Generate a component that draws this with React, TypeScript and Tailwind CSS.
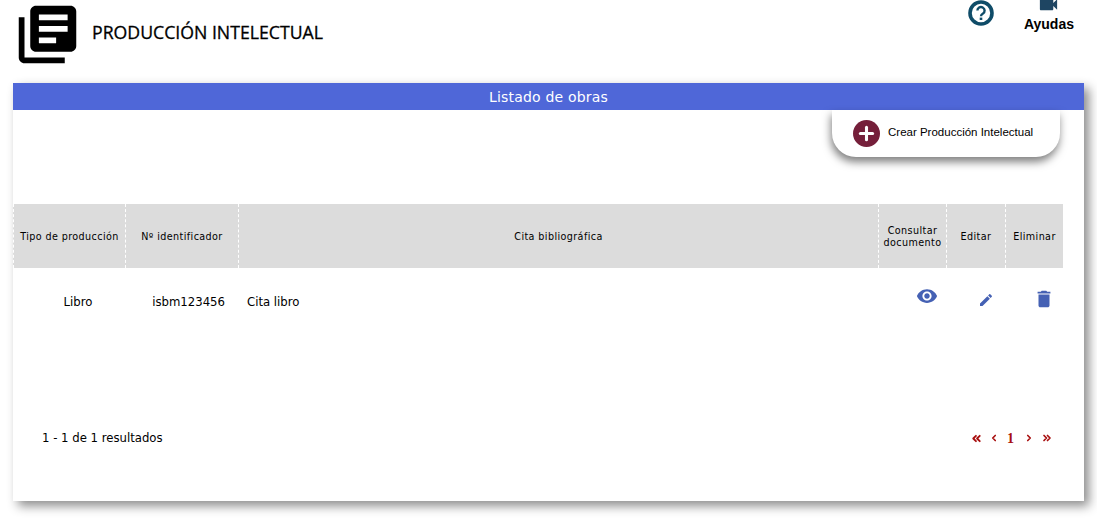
import { ChevronLeft, ChevronRight, ChevronsLeft, ChevronsRight, Plus } from "lucide-react";

const iconPaths = {
  books:
    "M4 6H2v14c0 1.1.9 2 2 2h14v-2H4V6zm16-4H8c-1.1 0-2 .9-2 2v12c0 1.1.9 2 2 2h12c1.1 0 2-.9 2-2V4c0-1.1-.9-2-2-2zm-1 9H9V9h10v2zm-4 4H9v-2h6v2zm4-8H9V5h10v2z",
  eye: "M12 4.5C7 4.5 2.73 7.61 1 12c1.73 4.39 6 7.5 11 7.5s9.27-3.11 11-7.5c-1.73-4.39-6-7.5-11-7.5zM12 17c-2.76 0-5-2.24-5-5s2.24-5 5-5 5 2.24 5 5-2.24 5-5 5zm0-8c-1.66 0-3 1.34-3 3s1.34 3 3 3 3-1.34 3-3-1.34-3-3-3z",
  edit: "M3 17.25V21h3.75L17.81 9.94l-3.75-3.75L3 17.25zM20.71 7.04c.39-.39.39-1.02 0-1.41l-2.34-2.34c-.39-.39-1.02-.39-1.41 0l-1.83 1.83 3.75 3.75 1.83-1.83z",
  trash: "M6 19c0 1.1.9 2 2 2h8c1.1 0 2-.9 2-2V7H6v12zM19 4h-3.5l-1-1h-5l-1 1H5v2h14V4z",
  video:
    "M17 10.5V7c0-.55-.45-1-1-1H4c-.55 0-1 .45-1 1v10c0 .55.45 1 1 1h12c.55 0 1-.45 1-1v-3.5l4 4v-11l-4 4z",
};

function Icon({ name, className }: { name: keyof typeof iconPaths; className: string }) {
  return (
    <svg className={className} viewBox="0 0 24 24" fill="currentColor">
      <path d={iconPaths[name]} />
    </svg>
  );
}

function HelpIcon() {
  return (
    <svg className="size-[26px] text-[#0f4c68]" viewBox="0 0 26 26" fill="none" stroke="currentColor">
      <circle cx="13" cy="13" r="11" strokeWidth="3.6" />
      <path d="M9.4 10.6a3.6 3.6 0 1 1 5.6 3c-1.3.8-2 1.3-2 2.6" strokeWidth="2.4" />
      <path d="M13 17.6v2.4" strokeWidth="2.6" />
    </svg>
  );
}

const columns = [
  { label: "Tipo de producción", width: "w-[112px]" },
  { label: "Nº identificador", width: "w-[113px]" },
  { label: "Cita bibliográfica", width: "flex-1" },
  { label: "Consultar documento", width: "w-[68px]" },
  { label: "Editar", width: "w-[59px]" },
  { label: "Eliminar", width: "w-[58px]" },
];

export default function App() {
  return (
    <div className="h-[523px] w-[1097px] overflow-hidden bg-white font-['DejaVu_Sans',Verdana,sans-serif] text-black">
      <header className="flex h-[83px] items-start pl-[13px]">
        <Icon name="books" className="size-[69px] shrink-0" />
        <h1 className="mt-[20px] ml-[10px] font-['Open_Sans',sans-serif] text-[17.7px] leading-6 [-webkit-text-stroke:0.3px_black]">
          PRODUCCIÓN INTELECTUAL
        </h1>
        <div className="ml-auto flex pr-[23px]">
          <HelpIcon />
          <div className="ml-[30px] flex flex-col items-center font-['Liberation_Sans',Arial,sans-serif] text-sm font-bold">
            <Icon name="video" className="size-[23px] -mt-[7px] text-[#1e4562]" />
            <span className="leading-[16px]">Ayudas</span>
          </div>
        </div>
      </header>

      <main className="ml-[13px] h-[418px] w-[1071px] bg-white shadow-[5px_5px_10px_rgba(0,0,0,0.45)]">
        <div className="flex h-[27px] items-center justify-center bg-[#4f67d8] text-sm tracking-[0.2px] text-white">
          Listado de obras
        </div>

        <div className="flex justify-end pr-[24px]">
          <button className="flex h-[47px] w-[228px] items-center gap-[8px] rounded-b-[24px] bg-white pl-[21px] font-['Liberation_Sans',Arial,sans-serif] text-[11.5px] text-black shadow-[-1px_5px_8px_rgba(0,0,0,0.5)]">
            <span className="flex size-[27px] items-center justify-center rounded-full bg-[#751f3a]">
              <Plus className="size-[21px] text-white" strokeWidth={3.5} />
            </span>
            <span className="-mt-[2px]">Crear Producción Intelectual</span>
          </button>
        </div>

        <div className="mt-[47px] w-[1050px]">
          <div className="flex h-[64px] bg-[#dcdcdc] text-[9.6px] leading-[12.5px] tracking-[0.4px]">
            {columns.map((column) => (
              <div
                key={column.label}
                className={`flex items-center justify-center border-l border-dashed border-white px-[4px] pt-[2px] text-center ${column.width}`}
              >
                {column.label}
              </div>
            ))}
          </div>

          <div className="flex h-[66px] text-[11.7px]">
            <div className="w-[112px] pl-[18px] pt-[27px] text-center leading-[15px]">Libro</div>
            <div className="w-[113px] pr-[13px] pt-[27px] text-right leading-[15px]">isbm123456</div>
            <div className="flex-1 pl-[9px] pt-[27px] leading-[15px]">Cita libro</div>
            <div className="flex w-[68px] justify-center pl-[30px] pt-[17px] text-[#4561b4]">
              <Icon name="eye" className="size-[22px] shrink-0" />
            </div>
            <div className="flex w-[59px] justify-center pl-[20px] pt-[24px] text-[#4561b4]">
              <Icon name="edit" className="size-[16px] shrink-0" />
            </div>
            <div className="flex w-[58px] justify-center pl-[19px] pt-[20px] text-[#4561b4]">
              <Icon name="trash" className="size-[22px] shrink-0" />
            </div>
          </div>
        </div>

        <div className="mt-[96px] flex items-center justify-between pl-[29px] pr-[31px] text-[11.7px]">
          <span>1 - 1 de 1 resultados</span>
          <span className="-mt-[1px] flex items-center text-[#a80f0f]">
            <ChevronsLeft className="size-[13px]" strokeWidth={3.4} />
            <ChevronLeft className="ml-[6px] size-[10px]" strokeWidth={4} />
            <span className="ml-[8px] font-['Liberation_Serif',serif] text-[14px] font-bold leading-[15px]">1</span>
            <ChevronRight className="ml-[10px] size-[10px]" strokeWidth={4} />
            <ChevronsRight className="ml-[7px] size-[12px]" strokeWidth={3.4} />
          </span>
        </div>
      </main>
    </div>
  );
}
